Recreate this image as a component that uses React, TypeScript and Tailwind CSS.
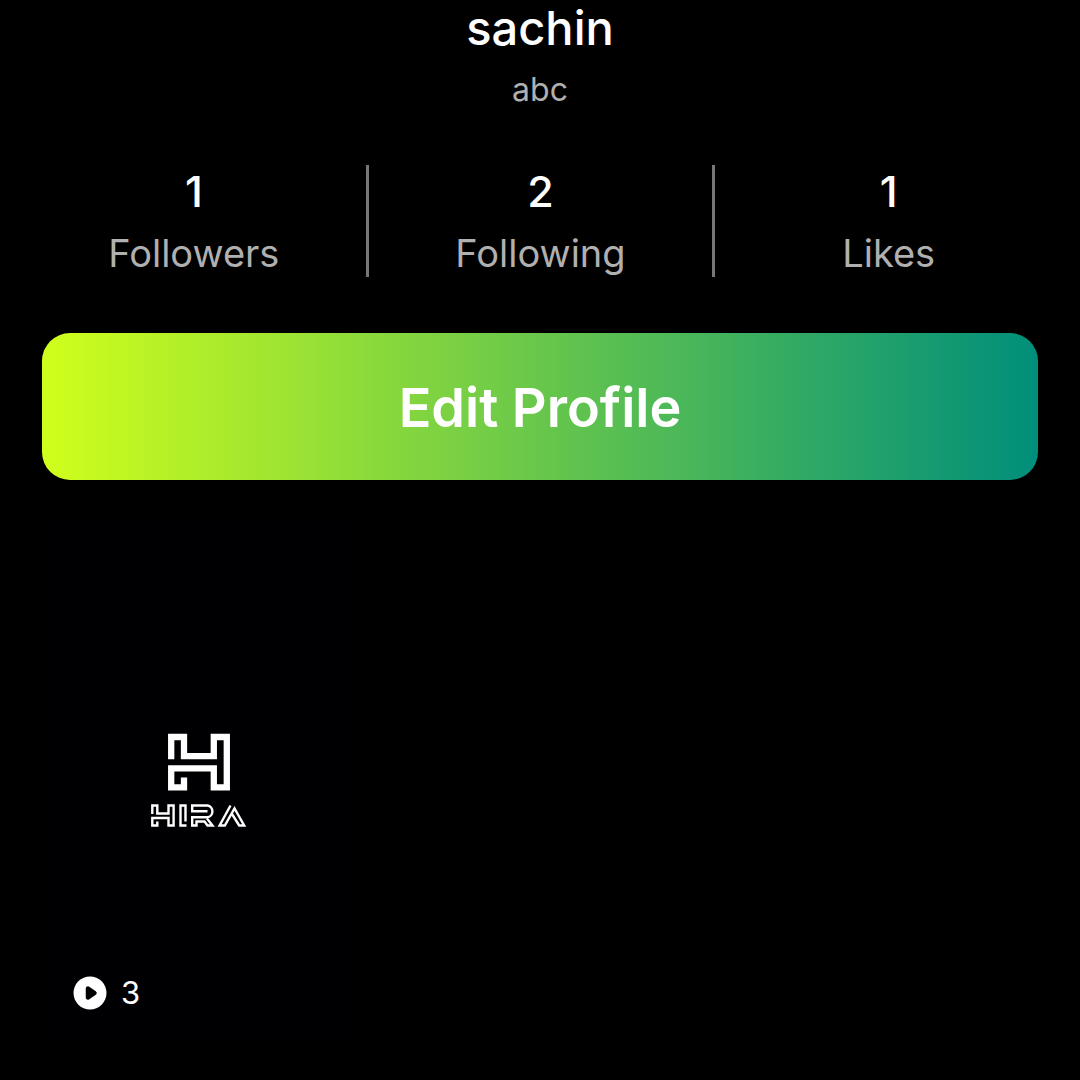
const stats = [
  { value: 1, label: "Followers" },
  { value: 2, label: "Following" },
  { value: 1, label: "Likes" },
];

function HiraLogo() {
  return (
    <svg viewBox="0 0 98 96" className="w-[98px]" fill="none" stroke="#fff" role="img" aria-label="Hira">
      <path
        strokeWidth="6.3"
        d="M22.200 27.300V5H35V24.200H64.800V5H77.800V55.300H64.800V36.400H22.200V55.300H35V45.600"
      />
      <g strokeWidth="2.4">
        <path d="M3.300 82V73.500H8.300V81.500H19.500V73.500H24.600V93.500H19.500V86H3.300V93.500H8.300V89.500" />
        <path d="M36.500 89.500V73.500H31.500V93.500H37.500" />
        <path d="M58.500 79.200H43.200V73.500H58.500A6 6 0 0 1 58.500 85.300H43.200V93.500H47.500V89.500H55.500L58.500 93.500H63.500L58 86.500" />
        <path d="M81.500 73.500L70.600 93.500H75.800L85.500 76.500L95.200 93.500H90.200L83 82" />
      </g>
    </svg>
  );
}

function PlayBadge() {
  return (
    <svg viewBox="0 0 34 34" className="size-[34px]" aria-hidden="true">
      <circle cx="17" cy="17" r="16.500" fill="#fff" />
      <path d="M15 12.500L21.500 17L15 21.500Z" fill="#000003" stroke="#000003" strokeWidth="4.500" strokeLinejoin="round" />
    </svg>
  );
}

export default function App() {
  return (
    <main className="min-h-screen bg-black px-[42px] pb-10 font-['Inter',sans-serif] text-white">
      <header className="text-center">
        <h1 className="pt-1 text-[47px] leading-[48px] font-medium">sachin</h1>
        <p className="pt-4 text-[32px] leading-[44px] text-[#b0b0b0]">abc</p>
      </header>

      <dl className="-mr-6 -ml-5 mt-[53px] grid grid-cols-3 divide-x-3 divide-[#777777] text-center">
        {stats.map((s) => (
          <div key={s.label} className="flex h-28 flex-col-reverse justify-end">
            <dt className="pt-2 text-[38px] leading-[60px] text-[#b0b0b0]">{s.label}</dt>
            <dd className="pt-0.5 text-[43px] leading-[48px] font-medium">{s.value}</dd>
          </div>
        ))}
      </dl>

      <button
        type="button"
        className="mt-14 h-[147px] w-full rounded-[28px] bg-linear-to-r/srgb from-[#d0ff1b] to-[#008f7b] pt-0.5 text-[54px] font-semibold"
      >
        Edit Profile
      </button>

      <section className="mt-10 grid grid-cols-3 gap-[30px]">
        <a href="#video" className="relative flex aspect-[312/520] items-center justify-center rounded-2xl bg-[#000003]">
          <HiraLogo />
          <span className="absolute bottom-[29px] left-[31px] flex items-center gap-[14px] text-[31px] leading-[36px]">
            <PlayBadge />
            3
          </span>
        </a>
      </section>
    </main>
  );
}
